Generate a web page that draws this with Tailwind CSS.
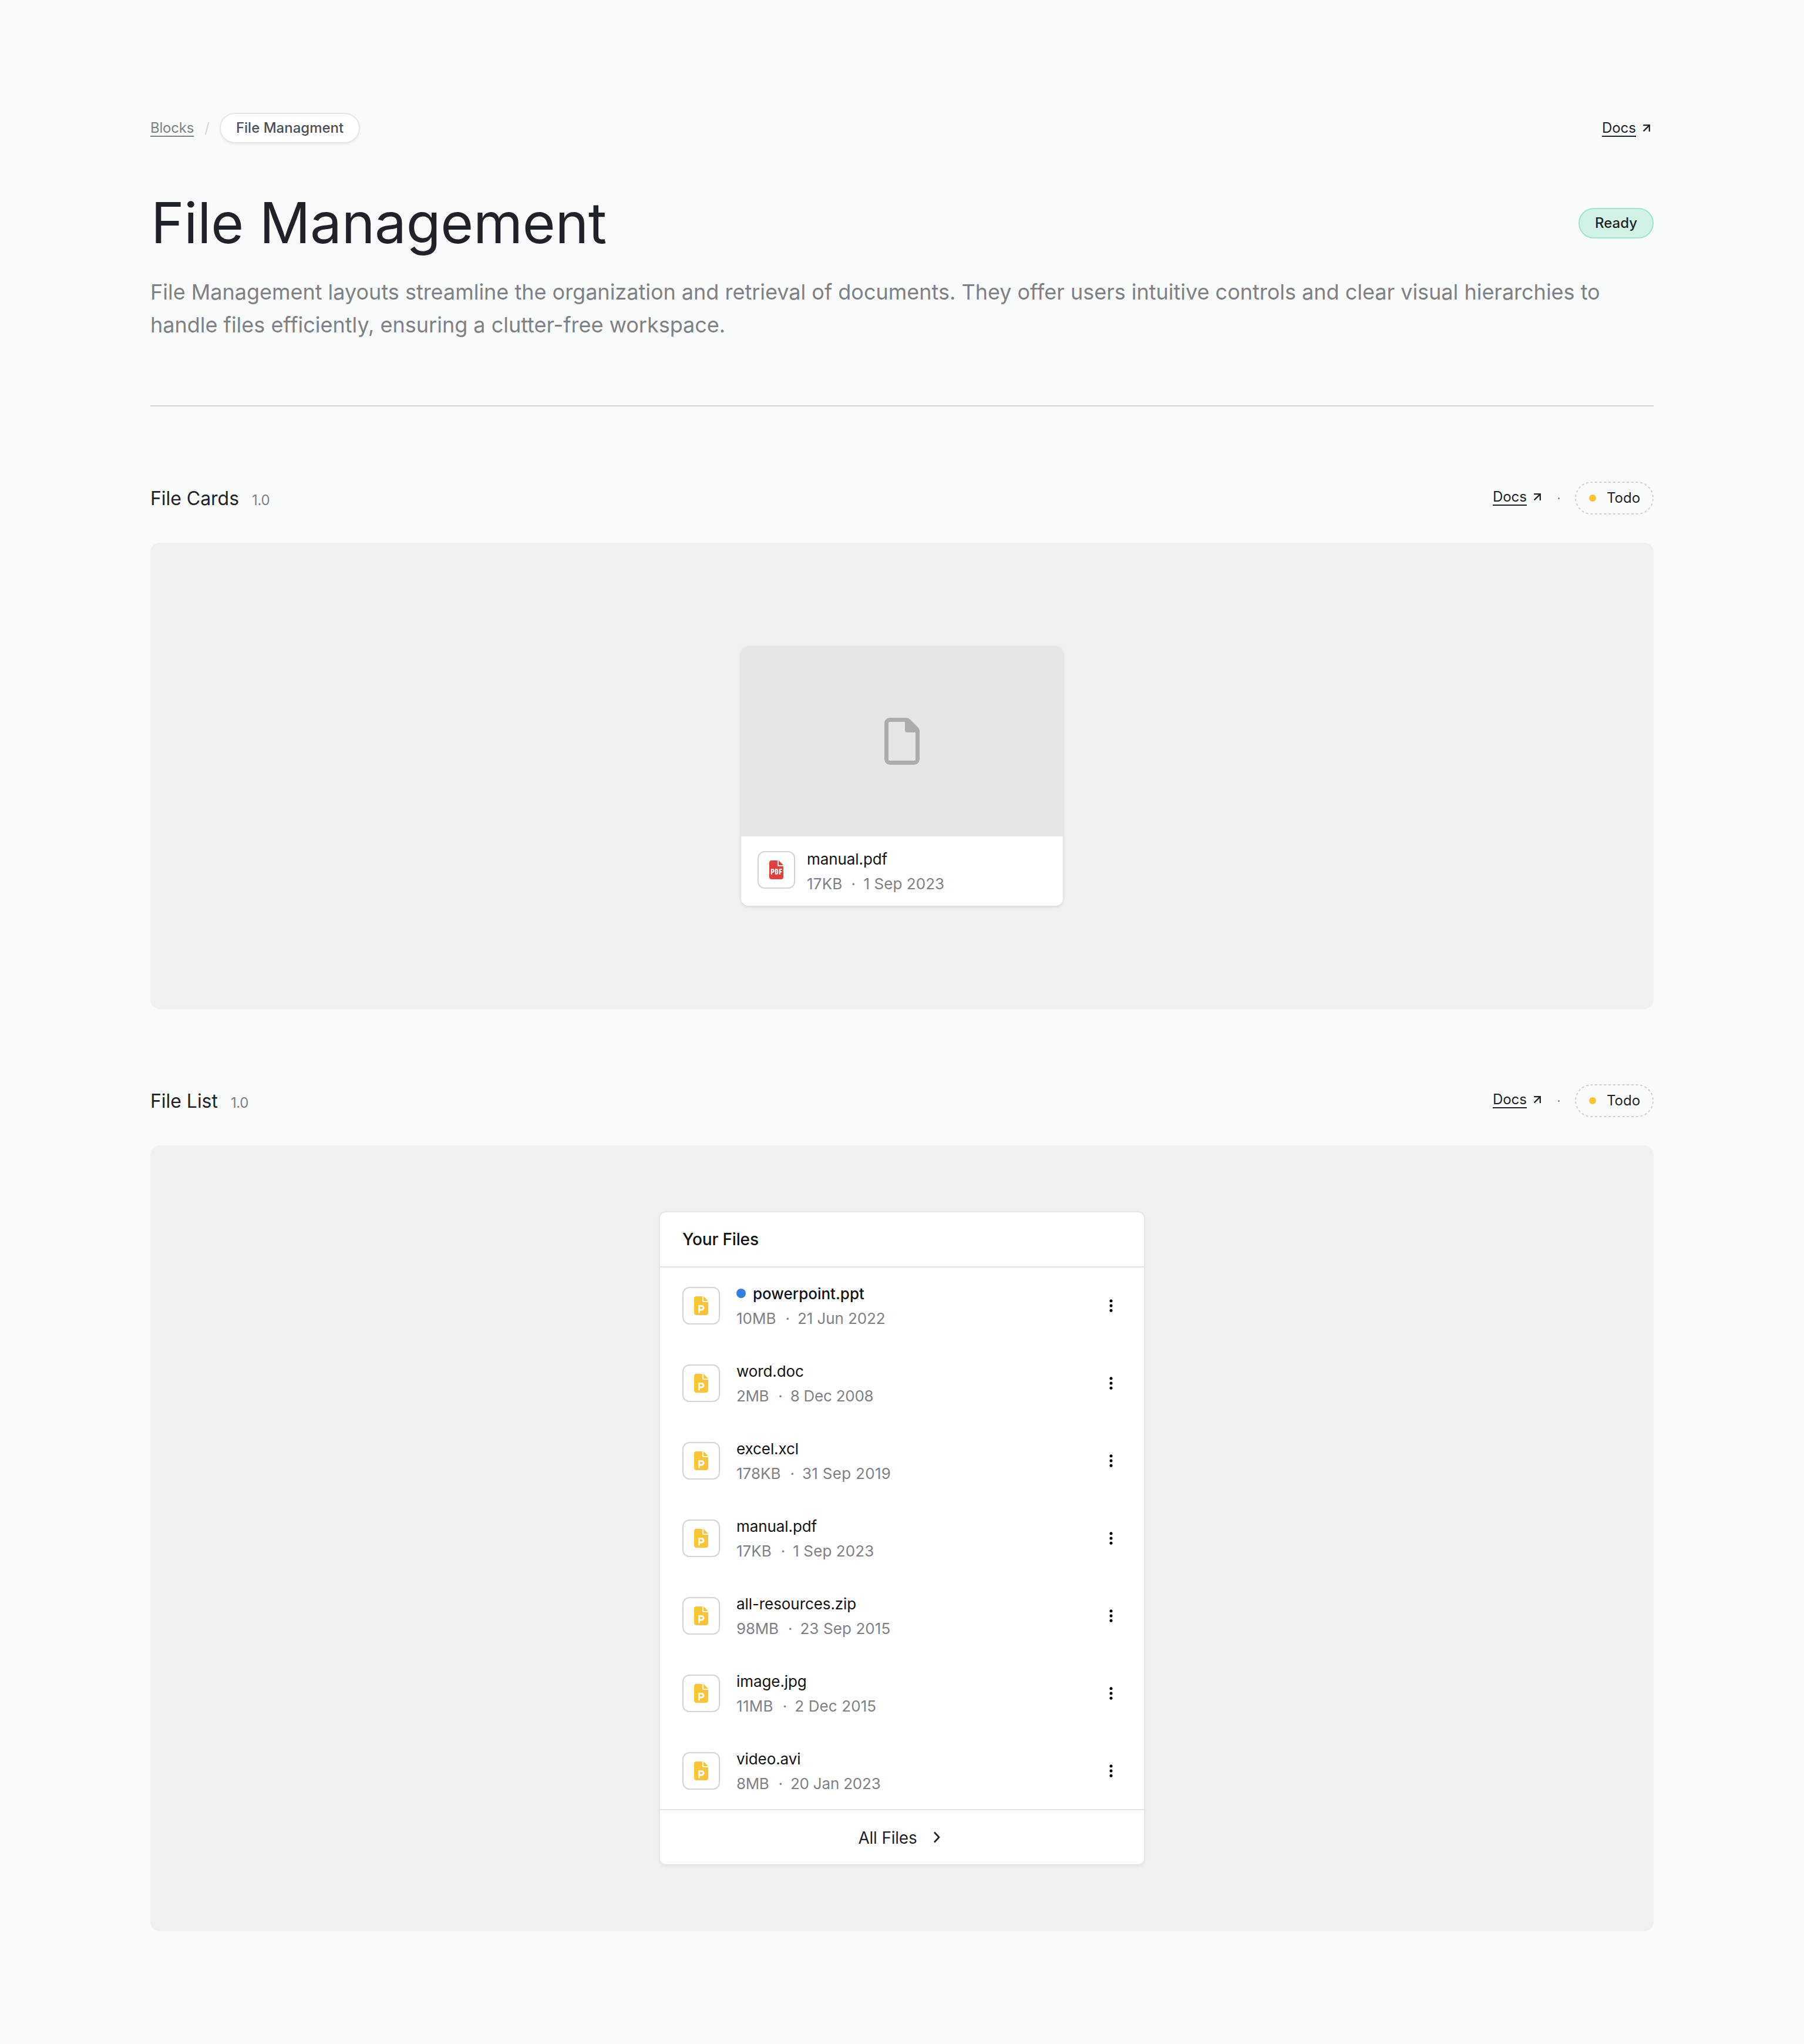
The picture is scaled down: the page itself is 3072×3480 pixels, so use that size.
<!DOCTYPE html>
<html lang="en">
<head>
<meta charset="utf-8">
<title>File Management</title>
<script src="https://cdn.jsdelivr.net/npm/@tailwindcss/browser@4"></script>
</head>
<body class="bg-[#f9fbfa] font-[Inter,sans-serif] text-[#1f2228]">
<svg class="hidden">
  <symbol id="arrow" viewBox="0 0 14 14"><path d="M1.200 2.200H11.800V13M11.400 2.600L1.600 12.400" fill="none" stroke="currentColor" stroke-width="2.3"/></symbol>
  <symbol id="doc-p" viewBox="0 0 24 32"><path d="M4 0H14V8A2 2 0 0 0 16 10H24V28A4 4 0 0 1 20 32H4A4 4 0 0 1 0 28V4A4 4 0 0 1 4 0ZM16 0L24 8H16Z" fill="#fac435"/><path d="M8.5 27V16.5H12.7A3.2 3.2 0 0 1 12.7 23H8.5" fill="none" stroke="#fff" stroke-width="3" stroke-linecap="round" stroke-linejoin="round"/></symbol>
  <symbol id="kebab" viewBox="0 0 6 22"><circle cx="3" cy="2.8" r="2.5"/><circle cx="3" cy="11" r="2.5"/><circle cx="3" cy="19.2" r="2.5"/></symbol>
</svg>
<main class="flex h-[3480px] w-[3072px] flex-col px-64 pt-48">
  <nav class="flex h-[52px] items-center justify-between text-2xl">
    <div class="flex items-center">
      <a class="tracking-[-0.2px] text-[#7f8085] underline decoration-2 underline-offset-[5px]">Blocks</a>
      <span class="ml-[18px] text-[#d4d4d4]">/</span>
      <span class="ml-[17px] flex h-[52px] items-center rounded-[26px] border-2 border-[#e6e6e6] bg-white px-[26px] font-medium text-[#4b4f55] shadow-[0_2px_4px_rgba(0,0,0,0.05)]">File Managment</span>
    </div>
    <div class="flex items-center"><a class="underline decoration-2 underline-offset-[5px]">Docs</a><svg class="ml-[11px] mr-[5px] size-[14px]"><use href="#arrow"/></svg></div>
  </nav>
  <header class="mt-[72px]">
    <div class="flex h-32 items-center justify-between">
      <h1 class="mb-0.5 ml-px text-8xl font-normal leading-[128px] tracking-[-0.3px]">File Management</h1>
      <span class="flex h-[52px] w-32 items-center justify-center rounded-full border-2 border-[#a0e4cd] bg-[#d2f2e6] text-2xl font-medium">Ready</span>
    </div>
    <p class="mt-[25px] text-4xl leading-[56px] tracking-[-0.01px] text-[#7f8085]">File Management layouts streamline the organization and retrieval of documents. They offer users intuitive controls and clear visual hierarchies to<br>handle files efficiently, ensuring a clutter-free workspace.</p>
  </header>
  <hr class="mt-[109px] border-t-2 border-[#d4d5d5]">
  <section class="mt-32">
    <div class="flex h-14 items-center justify-between">
      <h2 class="mt-0.5 flex items-baseline text-[32px] leading-[56px] tracking-[-0.04px]">File Cards<span class="ml-[22px] text-2xl tracking-[-0.3px] text-[#7f8085]">1.0</span></h2>
      <div class="flex items-center text-2xl"><a class="mb-1 underline decoration-2 underline-offset-[5px]">Docs</a><svg class="mb-1 ml-[11px] size-[14px]"><use href="#arrow"/></svg><span class="ml-7 size-[3px] rounded-full bg-[#7f8085]"></span>
        <span class="relative ml-[26px] flex h-14 w-[134px] items-center pl-6"><svg class="absolute inset-0 h-14 w-[134px]" viewBox="0 0 134 56"><rect x="1" y="1" width="132" height="54" rx="27" fill="none" stroke="#d0d0d0" stroke-width="2" stroke-dasharray="4 3.752" stroke-dashoffset="2"/></svg><i class="size-3 rounded-full bg-[#fac435]"></i><span class="ml-[18px]">Todo</span></span></div>
    </div>
    <div class="mt-12 flex h-[794px] items-center justify-center rounded-2xl bg-[#f0f0f0]">
      <article class="w-[548px] overflow-hidden rounded-xl bg-white shadow-[0_2px_5px_rgba(0,0,0,0.12),0_0_2px_rgba(0,0,0,0.03)]">
        <div class="flex h-[324px] items-center justify-center bg-[#e6e6e6]">
          <svg class="h-20 w-[60px]" viewBox="0 0 60 80"><path fill="#abacad" fill-rule="evenodd" d="M9 0H37Q41 0 44 3L57 16Q60 19 60 23V71A9 9 0 0 1 51 80H9A9 9 0 0 1 0 71V9A9 9 0 0 1 9 0ZM9 7A2 2 0 0 0 7 9V71A2 2 0 0 0 9 73H51A2 2 0 0 0 53 71V25H39A4 4 0 0 1 35 21V7Z"/></svg>
        </div>
        <div class="flex h-[118px] px-7 pt-[25px]">
          <span class="flex size-16 items-center justify-center rounded-xl border-2 border-[#d4d4d4]"><svg class="h-8 w-6" viewBox="0 0 24 32"><path d="M4 0H14V8A2 2 0 0 0 16 10H24V28A4 4 0 0 1 20 32H4A4 4 0 0 1 0 28V4A4 4 0 0 1 4 0ZM16 0L24 8H16Z" fill="#e53e3e"/><path d="M3.800 24V15H5.200A2.400 2.400 0 0 1 5.200 20H4M10.900 15V23H12Q14.100 23 14.100 21V17Q14.100 15 12 15ZM17.800 24V15H21.800M17.800 19.200H21.300" fill="none" stroke="#fff" stroke-width="2.100"/></svg></span>
          <div class="-mt-[7px] ml-5 text-[26px] leading-[42px]"><p class="tracking-[-0.08px] text-[#111214]">manual.pdf</p><p class="text-[#7f8085]"><span class="tracking-[0.2px]">17KB</span><span class="ml-[15px] mr-[13.5px]">·</span><span class="tracking-[0.05px]">1 Sep 2023</span></p></div>
        </div>
      </article>
    </div>
  </section>
  <section class="mt-32">
    <div class="flex h-14 items-center justify-between">
      <h2 class="mt-0.5 flex items-baseline text-[32px] leading-[56px] tracking-[-0.04px]">File List<span class="ml-[22px] text-2xl tracking-[-0.3px] text-[#7f8085]">1.0</span></h2>
      <div class="flex items-center text-2xl"><a class="mb-1 underline decoration-2 underline-offset-[5px]">Docs</a><svg class="mb-1 ml-[11px] size-[14px]"><use href="#arrow"/></svg><span class="ml-7 size-[3px] rounded-full bg-[#7f8085]"></span>
        <span class="relative ml-[26px] flex h-14 w-[134px] items-center pl-6"><svg class="absolute inset-0 h-14 w-[134px]" viewBox="0 0 134 56"><rect x="1" y="1" width="132" height="54" rx="27" fill="none" stroke="#d0d0d0" stroke-width="2" stroke-dasharray="4 3.752" stroke-dashoffset="2"/></svg><i class="size-3 rounded-full bg-[#fac435]"></i><span class="ml-[18px]">Todo</span></span></div>
    </div>
    <div class="mt-12 flex h-[1338px] items-center justify-center rounded-2xl bg-[#f0f0f0]">
      <article class="w-[828px] rounded-xl border-2 border-[#e6e6e6] bg-white shadow-[0_2px_4px_rgba(0,0,0,0.05)]">
        <h3 class="flex h-[94px] items-center border-b-2 border-[#e6e6e6] px-[38px] text-[28px] font-medium tracking-[-0.14px] text-[#111214]">Your Files</h3>
        <ul id="files" class="flex h-[922px] flex-col justify-center"></ul>
        <a class="flex h-[94px] items-center justify-center border-t-2 border-[#e6e6e6] text-[28px] tracking-[-0.2px]"><span class="mt-0.5">All Files</span><svg class="ml-[27px] mr-2.5 h-5 w-3" viewBox="0 0 12 20"><path d="M2 1.500L10 10L2 18.500" fill="none" stroke="currentColor" stroke-width="2.7"/></svg></a>
      </article>
    </div>
  </section>
</main>
<script>
// name, size, date, tracking of the size, tracking of the date, unread
const files = [
  ['powerpoint.ppt', '10MB', '21 Jun 2022', 'tracking-normal', 'tracking-[-0.1px]', true],
  ['word.doc', '2MB', '8 Dec 2008', 'tracking-[-0.4px]', 'tracking-[-0.25px]'],
  ['excel.xcl', '178KB', '31 Sep 2019', 'tracking-normal', 'tracking-[0.3px]'],
  ['manual.pdf', '17KB', '1 Sep 2023', 'tracking-normal', 'tracking-[0.1px]'],
  ['all-resources.zip', '98MB', '23 Sep 2015', 'tracking-[-0.2px]', 'tracking-[0.1px]'],
  ['image.jpg', '11MB', '2 Dec 2015', 'tracking-[0.3px]', 'tracking-[0.1px]'],
  ['video.avi', '8MB', '20 Jan 2023', 'tracking-[-0.4px]', 'tracking-[-0.2px]'],
];
document.getElementById('files').innerHTML = files.map(([name, size, date, sizeTracking, dateTracking, unread]) => `
<li class="flex h-[132px] shrink-0 items-center px-[38px]">
  <span class="flex size-16 items-center justify-center rounded-xl border-2 border-[#d4d4d4]"><svg class="h-8 w-6"><use href="#doc-p"/></svg></span>
  <div class="ml-7 mt-0.5 flex-1 text-[26px] leading-[42px]">
    <p class="flex items-center text-[#111214] ${unread ? 'font-medium' : 'tracking-[-0.08px]'}">${unread ? '<i class="mb-0.5 mr-3 size-4 rounded-full bg-[#3680dd]"></i>' : ''}${name}</p>
    <p class="text-[#7f8085]"><span class="${sizeTracking}">${size}</span><span class="ml-4 mr-[13px]">·</span><span class="${dateTracking}">${date}</span></p>
  </div>
  <svg class="mr-[15px] h-[22px] w-[6px]"><use href="#kebab"/></svg>
</li>`).join('');
</script>
</body>
</html>
